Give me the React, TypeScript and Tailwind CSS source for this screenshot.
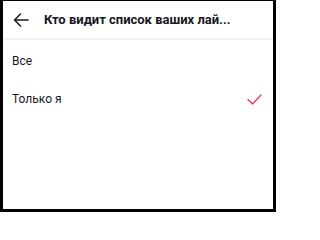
export default function App() {
  return (
    <div
      className="w-[276px] h-[212px] bg-white border-black border-t border-l-[3px] border-r-[3px] border-b-[3px] flex flex-col overflow-hidden"
      style={{ fontFamily: 'Roboto, "Liberation Sans", sans-serif' }}
    >
      {/* header */}
      <div className="h-[39px] flex items-center border-b-2 border-[#f2f2f2] shrink-0">
        <svg width="16" height="14" viewBox="0 0 16 14" className="ml-[10px]" fill="none" stroke="#161823" strokeWidth="1.5" strokeLinecap="round" strokeLinejoin="round">
          <path d="M15 7H1.5M7.5 1L1.5 7l6 6" />
        </svg>
        <span className="ml-[15px] text-[13px] font-bold text-[#161823] truncate">Кто видит список ваших лай...</span>
      </div>
      {/* options */}
      <div className="flex flex-col">
        <div className="h-[40px] flex items-center pl-[9px] pt-[2px] text-[12px] text-[#161823]">Все</div>
        <div className="h-[38px] flex items-center pl-[9px] pr-[11px] text-[12px] text-[#161823]">
          <span className="flex-1">Только я</span>
          <svg width="15" height="11" viewBox="0 0 15 11" fill="none" stroke="#fe2c55" strokeWidth="1.3" strokeLinecap="round" strokeLinejoin="round">
            <path d="M1 5.5l4.5 4.5L14 1" />
          </svg>
        </div>
      </div>
    </div>
  )
}
